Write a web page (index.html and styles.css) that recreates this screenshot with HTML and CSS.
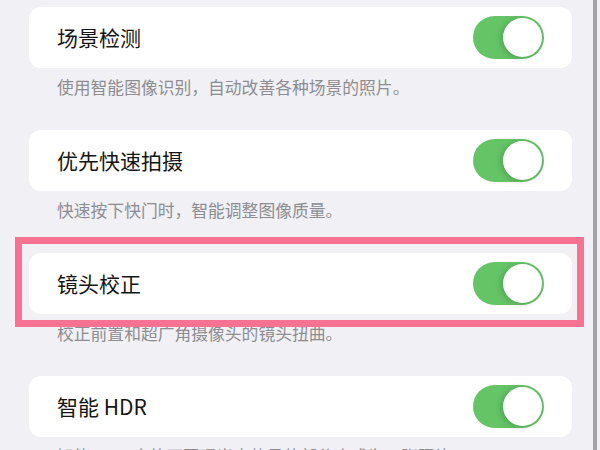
FILE: index.html
```html
<!DOCTYPE html>
<html lang="zh-CN">
<head>
<meta charset="utf-8">
<link rel="stylesheet" href="styles.css">
</head>
<body>
<div class="screen">
  <div class="list">
    <section class="group">
      <div class="card">
        <span class="title">场景检测</span>
        <span class="toggle"><span class="knob"></span></span>
      </div>
      <p class="caption">使用智能图像识别，自动改善各种场景的照片。</p>
    </section>
    <section class="group">
      <div class="card">
        <span class="title">优先快速拍摄</span>
        <span class="toggle"><span class="knob"></span></span>
      </div>
      <p class="caption">快速按下快门时，智能调整图像质量。</p>
    </section>
    <section class="group marked">
      <div class="card">
        <span class="title">镜头校正</span>
        <span class="toggle"><span class="knob"></span></span>
      </div>
      <p class="caption">校正前置和超广角摄像头的镜头扭曲。</p>
      <div class="highlight"></div>
    </section>
    <section class="group">
      <div class="card">
        <span class="title">智能 HDR</span>
        <span class="toggle"><span class="knob"></span></span>
      </div>
      <p class="caption">智能 HDR 会将不同曝光中的最佳部分合成为一张照片。</p>
    </section>
  </div>
  <div class="edge"></div>
</div>
</body>
</html>
```
FILE: styles.css
```css
* { box-sizing: border-box; }
html, body {
  margin: 0;
  padding: 0;
  width: 600px;
  height: 450px;
  overflow: hidden;
  background: #f1f0f5;
  font-family: "Noto Sans CJK SC", "Noto Sans", sans-serif;
}
.screen {
  display: flex;
  height: 450px;
}
.list {
  width: 593px;
  padding: 7px 0 0 29px;
  display: flex;
  flex-direction: column;
}
.edge {
  width: 4px;
  height: 450px;
  background: #a3a3a7;
}
.group {
  position: relative;
  width: 543px;
  margin-bottom: 32px;
}
.card {
  height: 61px;
  background: #ffffff;
  border-radius: 12px;
  display: flex;
  align-items: center;
  justify-content: space-between;
  padding: 0 28px 0 28px;
}
.title {
  font-size: 21px;
  color: #151515;
  line-height: 1;
}
.toggle {
  width: 71px;
  height: 43px;
  border-radius: 22px;
  background: #64c466;
  display: flex;
  align-items: center;
  justify-content: flex-end;
  padding: 0 2px;
}
.knob {
  width: 39px;
  height: 39px;
  border-radius: 50%;
  background: #ffffff;
  box-shadow: -2px 1px 6px rgba(0, 0, 0, 0.18);
}
.caption {
  margin: 8px 0 0 28px;
  height: 22px;
  line-height: 22px;
  font-size: 16.8px;
  color: #8d8d91;
  white-space: nowrap;
}
.highlight {
  position: absolute;
  left: -14px;
  top: -16px;
  width: 569px;
  height: 90px;
  border: 7px solid #f67192;
}
```
